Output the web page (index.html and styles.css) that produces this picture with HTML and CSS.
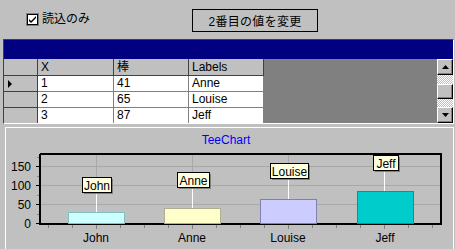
FILE: index.html
```html
<!DOCTYPE html>
<html>
<head>
<meta charset="utf-8">
<link rel="stylesheet" href="styles.css">
</head>
<body>
<div class="app">
  <div class="toolbar">
    <label class="check">
      <span class="box"><svg width="9" height="9" viewBox="0 0 9 9"><path d="M1 4 L3 6 L8 1 L8 3 L3 8 L1 6 Z" fill="#000"/></svg></span>
      <span>読込のみ</span>
    </label>
    <div class="button">2番目の値を変更</div>
  </div>

  <div class="grid">
    <div class="titlebar"></div>
    <div class="gridbody">
      <div class="table">
        <div class="row head">
          <div class="cell ind"></div>
          <div class="cell c1">X</div>
          <div class="cell c2">棒</div>
          <div class="cell c3">Labels</div>
        </div>
        <div class="row">
          <div class="cell ind"><span class="arrow"></span></div>
          <div class="cell c1">1</div>
          <div class="cell c2">41</div>
          <div class="cell c3">Anne</div>
        </div>
        <div class="row">
          <div class="cell ind"></div>
          <div class="cell c1">2</div>
          <div class="cell c2">65</div>
          <div class="cell c3">Louise</div>
        </div>
        <div class="row">
          <div class="cell ind"></div>
          <div class="cell c1">3</div>
          <div class="cell c2">87</div>
          <div class="cell c3">Jeff</div>
        </div>
      </div>
      <div class="empty"></div>
      <div class="scrollbar">
        <div class="sbtn"><svg width="7" height="4" viewBox="0 0 7 4"><path d="M3.5 0 L7 4 L0 4 Z" fill="#000"/></svg></div>
        <div class="track"></div>
        <div class="thumb"></div>
        <div class="track"></div>
        <div class="sbtn"><svg width="7" height="4" viewBox="0 0 7 4"><path d="M0 0 L7 0 L3.5 4 Z" fill="#000"/></svg></div>
      </div>
    </div>
  </div>

  <div class="chart">
    <svg class="chartsvg" width="447" height="122" viewBox="6 127 447 122">
      <text x="226" y="143" class="title" text-anchor="middle">TeeChart</text>
      <g stroke="#a8a8a8" stroke-width="1">
        <line x1="41" y1="165.5" x2="440" y2="165.5"/>
        <line x1="41" y1="184.5" x2="440" y2="184.5"/>
        <line x1="41" y1="203.5" x2="440" y2="203.5"/>
      </g>
      <g stroke="#a8a8a8" stroke-width="1">
        <line x1="96.5" y1="154" x2="96.5" y2="222"/>
        <line x1="192.5" y1="154" x2="192.5" y2="222"/>
        <line x1="288.5" y1="154" x2="288.5" y2="222"/>
        <line x1="384.5" y1="154" x2="384.5" y2="222"/>
      </g>
      <line x1="40" y1="153" x2="40" y2="224" stroke="#000" stroke-width="2"/>
      <line x1="39" y1="223" x2="441" y2="223" stroke="#000" stroke-width="2"/>
      <line x1="441" y1="152" x2="441" y2="224" stroke="#000" stroke-width="2"/>
      <line x1="40" y1="153" x2="442" y2="153" stroke="#000" stroke-width="2"/>
      <g stroke="#000" stroke-width="1">
        <line x1="36" y1="165.5" x2="39" y2="165.5"/>
        <line x1="36" y1="184.5" x2="39" y2="184.5"/>
        <line x1="36" y1="203.5" x2="39" y2="203.5"/>
        <line x1="36" y1="222.5" x2="39" y2="222.5"/>
      </g>
      <g stroke="#808080" stroke-width="1">
        <line x1="37" y1="156.5" x2="39" y2="156.5"/>
        <line x1="37" y1="175.5" x2="39" y2="175.5"/>
        <line x1="37" y1="194.5" x2="39" y2="194.5"/>
        <line x1="37" y1="213.5" x2="39" y2="213.5"/>
      </g>
      <g stroke="#808080" stroke-width="1">
        <line x1="48.5" y1="224" x2="48.5" y2="227"/>
        <line x1="72.5" y1="224" x2="72.5" y2="227"/>
        <line x1="96.5" y1="224" x2="96.5" y2="228"/>
        <line x1="120.5" y1="224" x2="120.5" y2="227"/>
        <line x1="144.5" y1="224" x2="144.5" y2="227"/>
        <line x1="168.5" y1="224" x2="168.5" y2="227"/>
        <line x1="192.5" y1="224" x2="192.5" y2="228"/>
        <line x1="216.5" y1="224" x2="216.5" y2="227"/>
        <line x1="240.5" y1="224" x2="240.5" y2="227"/>
        <line x1="264.5" y1="224" x2="264.5" y2="227"/>
        <line x1="288.5" y1="224" x2="288.5" y2="228"/>
        <line x1="312.5" y1="224" x2="312.5" y2="227"/>
        <line x1="336.5" y1="224" x2="336.5" y2="227"/>
        <line x1="360.5" y1="224" x2="360.5" y2="227"/>
        <line x1="384.5" y1="224" x2="384.5" y2="228"/>
        <line x1="408.5" y1="224" x2="408.5" y2="227"/>
        <line x1="432.5" y1="224" x2="432.5" y2="227"/>
      </g>
      <g class="axis" text-anchor="end">
        <text x="31" y="170">150</text>
        <text x="31" y="189">100</text>
        <text x="31" y="208">50</text>
        <text x="31" y="227">0</text>
      </g>
      <g stroke="#fff" stroke-width="1">
        <line x1="96.5" y1="192" x2="96.5" y2="211"/>
        <line x1="192.5" y1="188" x2="192.5" y2="207"/>
        <line x1="288.5" y1="178" x2="288.5" y2="198"/>
        <line x1="384.5" y1="171" x2="384.5" y2="190"/>
      </g>
      <rect x="68.5" y="211.5" width="56" height="11" fill="#ccffff" stroke="#80c0c0"/>
      <rect x="164.5" y="207.5" width="56" height="15" fill="#ffffcc" stroke="#b0b090"/>
      <rect x="260.5" y="198.5" width="56" height="24" fill="#ccccff" stroke="#8080b0"/>
      <rect x="357.5" y="190.5" width="56" height="32" fill="#00cccc" stroke="#009999"/>
      <g class="mark">
        <rect x="84" y="178" width="29" height="15" fill="#808080"/>
        <rect x="82.5" y="176.5" width="29" height="15" fill="#ffffe0" stroke="#000"/>
        <text x="97" y="188.5" text-anchor="middle">John</text>
        <rect x="179" y="173" width="32" height="15" fill="#808080"/>
        <rect x="177.5" y="171.5" width="32" height="15" fill="#ffffe0" stroke="#000"/>
        <text x="193.5" y="183.5" text-anchor="middle">Anne</text>
        <rect x="272" y="164" width="38" height="15" fill="#808080"/>
        <rect x="270.5" y="162.5" width="38" height="15" fill="#ffffe0" stroke="#000"/>
        <text x="289.5" y="174.5" text-anchor="middle">Louise</text>
        <rect x="375" y="156" width="25" height="15" fill="#808080"/>
        <rect x="373.5" y="154.5" width="25" height="15" fill="#ffffe0" stroke="#000"/>
        <text x="386" y="166.5" text-anchor="middle">Jeff</text>
      </g>
      <g class="axis" text-anchor="middle">
        <text x="96" y="241">John</text>
        <text x="192" y="241">Anne</text>
        <text x="288" y="241">Louise</text>
        <text x="385" y="241">Jeff</text>
      </g>
    </svg>
  </div>
</div>
</body>
</html>
```
FILE: styles.css
```css
html, body {
  margin: 0;
  padding: 0;
  background: #c0c0c0;
}
.app {
  width: 455px;
  height: 249px;
  overflow: hidden;
  background: #c0c0c0;
  font-family: "Liberation Sans", "Noto Sans CJK JP", sans-serif;
  font-size: 12px;
  color: #000;
}
.toolbar {
  height: 39px;
  display: flex;
  align-items: flex-start;
}
.check {
  display: flex;
  align-items: center;
  margin: 13px 0 0 27px;
  height: 13px;
  gap: 4px;
  font-size: 12px;
  line-height: 13px;
}
.box {
  width: 9px;
  height: 9px;
  border: 1px solid #000;
  background: #fff;
  box-shadow: 0 0 0 1px #808080;
  display: flex;
}
.button {
  margin: 9px 0 0 102px;
  width: 124px;
  height: 21px;
  border: 1px solid #000;
  display: flex;
  align-items: center;
  justify-content: center;
  letter-spacing: 0.3px;
}
.grid {
  margin: 0 1px 0 3px;
  border-top: 1px solid #404040;
  border-left: 1px solid #404040;
  border-right: 1px solid #fff;
  border-bottom: 1px solid #fff;
  height: 83px;
  display: flex;
  flex-direction: column;
}
.titlebar {
  height: 19px;
  background: #000080;
}
.gridbody {
  flex: 1;
  display: flex;
  overflow: hidden;
}
.table {
  width: 260px;
  display: flex;
  flex-direction: column;
}
.row {
  display: flex;
  height: 16px;
  flex: none;
}
.row.head {
  height: 17px;
}
.cell {
  box-sizing: border-box;
  border-right: 1px solid #808080;
  border-bottom: 1px solid #808080;
  background: #fff;
  padding-left: 3px;
  line-height: 15px;
  overflow: hidden;
  white-space: nowrap;
}
.head .cell {
  background: #c0c0c0;
  border-right: 1px solid #404040;
  border-bottom: 1px solid #404040;
  line-height: 16px;
}
.cell.ind {
  width: 34px;
  background: #c0c0c0;
  border-right: 1px solid #404040;
  border-bottom: 1px solid #404040;
  position: relative;
}
.cell.c1 { width: 76px; }
.cell.c2 { width: 75px; }
.cell.c3 { width: 75px; }
.arrow {
  position: absolute;
  left: 4px;
  top: 4px;
  width: 0;
  height: 0;
  border-top: 4px solid transparent;
  border-bottom: 4px solid transparent;
  border-left: 4px solid #000;
}
.empty {
  flex: 1;
  background: #808080;
}
.scrollbar {
  width: 16px;
  display: flex;
  flex-direction: column;
}
.sbtn, .thumb {
  box-sizing: border-box;
  height: 16px;
  flex: none;
  background: #c0c0c0;
  border-top: 1px solid #fff;
  border-left: 1px solid #fff;
  border-right: 1px solid #000;
  border-bottom: 1px solid #000;
  box-shadow: inset -1px -1px 0 #808080;
  display: flex;
  align-items: center;
  justify-content: center;
}
.thumb {
  height: 15px;
}
.track {
  flex: 1;
  background-color: #fff;
  background-image:
    linear-gradient(45deg, #c0c0c0 25%, transparent 25%, transparent 75%, #c0c0c0 75%),
    linear-gradient(45deg, #c0c0c0 25%, transparent 25%, transparent 75%, #c0c0c0 75%);
  background-size: 2px 2px;
  background-position: 0 0, 1px 1px;
}
.chart {
  margin: 3px 1px 0 5px;
  border-top: 1px solid #fff;
  border-left: 1px solid #fff;
  border-right: 1px solid #fff;
  height: 122px;
  display: flex;
}
.chartsvg {
  display: block;
}
.chartsvg text {
  font-family: "Liberation Sans", sans-serif;
  font-size: 12px;
  fill: #000;
}
.chartsvg text.title {
  fill: #0000ff;
  font-size: 12px;
}
```
